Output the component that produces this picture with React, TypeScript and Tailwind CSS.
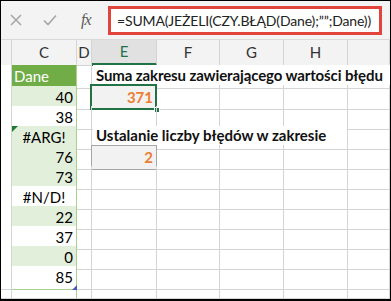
import React from 'react';

const FONT = { fontFamily: 'Lato, "Open Sans", sans-serif' };

const cols = 'grid grid-cols-[11px_65px_15px_65px_63px_64px_64px_1fr]';

type Row = {
  c: string;
  kind: 'num' | 'err' | 'head';
  band: boolean;
  tri?: boolean;
  label?: string;
  labelBox?: string;
};

const rows: Row[] = [
  {
    c: 'Dane',
    kind: 'head',
    band: true,
    label: 'Suma zakresu zawierającego wartości błędu',
    labelBox: 'right-0 tracking-[-0.12px]',
  },
  { c: '40', kind: 'num', band: true },
  { c: '38', kind: 'num', band: false },
  {
    c: '#ARG!',
    kind: 'err',
    band: true,
    tri: true,
    label: 'Ustalanie liczby błędów w zakresie',
    labelBox: 'w-[254px]',
  },
  { c: '76', kind: 'num', band: true },
  { c: '73', kind: 'num', band: true },
  { c: '#N/D!', kind: 'err', band: false },
  { c: '22', kind: 'num', band: true },
  { c: '37', kind: 'num', band: false },
  { c: '0', kind: 'num', band: true },
  { c: '85', kind: 'num', band: false },
];

function Cell({ className = '' }: { className?: string }) {
  return <div className={`border-r border-b border-[#d4d4d4] h-full ${className}`} />;
}

function CCell({ row, last }: { row: Row; last: boolean }) {
  if (row.kind === 'head') {
    return (
      <div className="h-full bg-[#70ad47] border-r border-b border-[#a9d08e] text-white text-[15px] pl-[2px] flex items-center">
        {row.c}
      </div>
    );
  }
  return (
    <div
      className={`relative h-full border-r border-b border-[#a9d08e] text-[15px] text-black flex items-center ${
        row.band ? 'bg-[#e2efda]' : 'bg-white'
      } ${row.kind === 'err' ? 'justify-center' : 'justify-end pr-[3px]'}`}
    >
      {row.tri && (
        <span className="absolute left-0 top-0 w-0 h-0 border-t-[6px] border-r-[6px] border-t-[#1e7b34] border-r-transparent" />
      )}
      {row.c}
      {last && (
        <span className="absolute right-[-1px] bottom-[-1px] w-0 h-0 border-b-[5px] border-l-[5px] border-b-[#4358b8] border-l-transparent" />
      )}
    </div>
  );
}

function ECell({ i }: { i: number }) {
  if (i === 1) {
    return (
      <div className="relative h-full border-r border-b border-[#d4d4d4]">
        <div className="absolute left-[-2px] top-[-2px] right-[-1px] bottom-[-1px] border-2 border-[#217346] bg-[#f2f2f2] flex items-center justify-end pr-[2px] text-[15px] font-bold text-[#ed7d31]">
          371
        </div>
        <span className="absolute right-[-4px] bottom-[-4px] w-[6px] h-[6px] bg-[#217346] border border-white" />
      </div>
    );
  }
  if (i === 4) {
    return (
      <div className="relative h-full border-r border-b border-[#d4d4d4]">
        <div className="absolute left-[-1px] top-[-1px] right-[-1px] bottom-[-1px] border border-[#a6a6a6] bg-[#f2f2f2] flex items-center justify-end pr-[3px] text-[15px] font-bold text-[#ed7d31]">
          2
        </div>
      </div>
    );
  }
  return <Cell />;
}

export default function App() {
  return (
    <div className="w-[391px] h-[301px] overflow-hidden bg-white border border-black border-b-2 flex flex-col" style={FONT}>
      {/* formula bar */}
      <div className="h-[39px] shrink-0 bg-[#f3f3f3] flex items-center border-b border-[#dadada]">
        <div className="w-[107px] flex items-center">
          <svg width="12" height="12" viewBox="0 0 12 12" className="ml-[9px]">
            <path d="M1 1 L11 11 M11 1 L1 11" stroke="#a6a6a6" strokeWidth="1.5" />
          </svg>
          <svg width="14" height="12" viewBox="0 0 14 12" className="ml-[21px]">
            <path d="M1 6.5 L5 10.5 L13 1.5" stroke="#a6a6a6" strokeWidth="1.6" fill="none" />
          </svg>
          <span
            className="ml-[24px] text-[16px] italic text-[#5a5a5a] tracking-[-1px]"
            style={{ fontFamily: '"Liberation Serif", serif' }}
          >
            fx
          </span>
        </div>
        <div className="h-[29px] w-[274px] bg-white border-[3px] border-[#e0443b] flex items-center pl-[6px] text-[14px] tracking-[-0.15px] text-[#222] whitespace-nowrap overflow-hidden">
          =SUMA(JEŻELI(CZY.BŁĄD(Dane);””;Dane))
        </div>
      </div>

      {/* column headers */}
      <div className={`${cols} h-[25px] shrink-0 bg-[#f3f3f3] text-[15px] text-[#333]`}>
        <div className="border-r border-b border-[#d4d4d4]" />
        {['C', 'D', 'E', 'F', 'G', 'H', ''].map((h) => (
          <div
            key={h || 'I'}
            className={`border-r border-b border-[#d4d4d4] flex items-center justify-center ${
              h === 'E' ? 'bg-[#e1e1e1] text-[#217346] border-b-[3px] border-b-[#217346]' : ''
            }`}
          >
            {h}
          </div>
        ))}
      </div>

      {/* rows */}
      {rows.map((row, i) => (
        <div key={i} className={`${cols} relative shrink-0 ${i === 0 ? 'h-[21px]' : 'h-[20px]'}`}>
          <Cell className="bg-white" />
          <CCell row={row} last={i === rows.length - 1} />
          <Cell />
          {row.label ? <Cell /> : <ECell i={i} />}
          <Cell />
          <Cell />
          <Cell />
          <Cell />
          {row.label && (
            <div
              className={`absolute left-[92px] top-0 bottom-[1px] bg-white pl-[3px] flex items-center text-[15px] font-bold text-[#111] whitespace-nowrap ${row.labelBox}`}
            >
              {row.label}
            </div>
          )}
        </div>
      ))}
      <div className={`${cols} flex-1`}>
        <Cell className="bg-white" />
        <Cell className="border-r-[#a9d08e]" />
        <Cell />
        <Cell />
        <Cell />
        <Cell />
        <Cell />
        <Cell />
      </div>
    </div>
  );
}
